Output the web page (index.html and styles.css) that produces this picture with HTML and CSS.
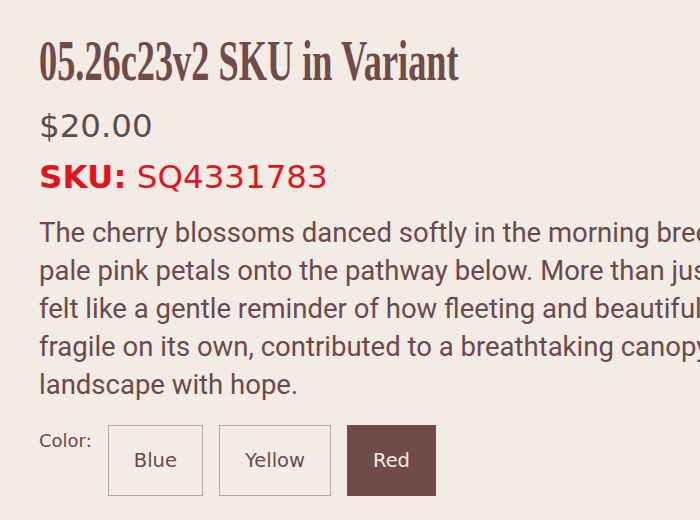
FILE: index.html
```html
<!DOCTYPE html>
<html lang="en">
<head>
    <meta charset="UTF-8">
    <meta name="viewport" content="width=device-width, initial-scale=1.0">
    <title>05.26c23v2 SKU in Variant</title>
    <link rel="stylesheet" href="styles.css">
</head>
<body>

    <div class="product">
        <h1 class="product-title"><span>05.26c23v2 SKU in Variant</span></h1>
        <div class="price">$20.00</div>
        <div class="sku"><strong>SKU:</strong> SQ4331783</div>

        <p class="description">The cherry blossoms danced softly in the morning breeze, scattering<br>
            pale pink petals onto the pathway below. More than just a pretty sight, it<br>
            felt like a gentle reminder of how fleeting and beautiful life can be. Each petal,<br>
            fragile on its own, contributed to a breathtaking canopy that filled the<br>
            landscape with hope.</p>

        <div class="variant">
            <span class="variant-label">Color:</span>
            <div class="options">
                <button class="option">Blue</button>
                <button class="option">Yellow</button>
                <button class="option selected">Red</button>
            </div>
        </div>
    </div>

</body>
</html>
```

FILE: styles.css
```css
html, body {
    overflow: hidden;
}

body {
    margin: 0;
    background: #f3ebe5;
    color: #6b4a4b;
    font-family: "DejaVu Sans", Verdana, sans-serif;
}

.product {
    padding: 31px 39px;
}

.product-title {
    margin: 0 0 15px;
    font-family: "Liberation Serif", "Times New Roman", serif;
    font-weight: bold;
    font-size: 57px;
    line-height: 60px;
    color: #714a4a;
    white-space: nowrap;
}

/* squeeze the serif into a tall condensed display face */
.product-title span {
    display: inline-block;
    transform: scaleX(0.637);
    transform-origin: left center;
}

.price {
    font-size: 32.5px;
    line-height: 40px;
    color: #5f4d4e;
    margin-bottom: 11px;
}

.sku {
    font-size: 32.5px;
    line-height: 40px;
    color: #e3141b;
}

.description {
    margin: 17px 0 21px;
    font-family: Roboto, sans-serif;
    font-size: 27.5px;
    line-height: 38px;
    white-space: nowrap;
}

.variant {
    display: flex;
    align-items: flex-start;
    gap: 16px;
}

.variant-label {
    font-size: 18px;
    line-height: 22px;
    padding-top: 5px;
}

.options {
    display: flex;
    gap: 16px;
}

.option {
    font-family: "DejaVu Sans", Verdana, sans-serif;
    font-size: 19.5px;
    color: #6b4a4b;
    background: transparent;
    border: 1px solid #b9a6a2;
    padding: 0 25px;
    height: 71px;
    cursor: pointer;
}

.option.selected {
    background: #714a4a;
    border-color: #714a4a;
    color: #f3ebe5;
}
```
